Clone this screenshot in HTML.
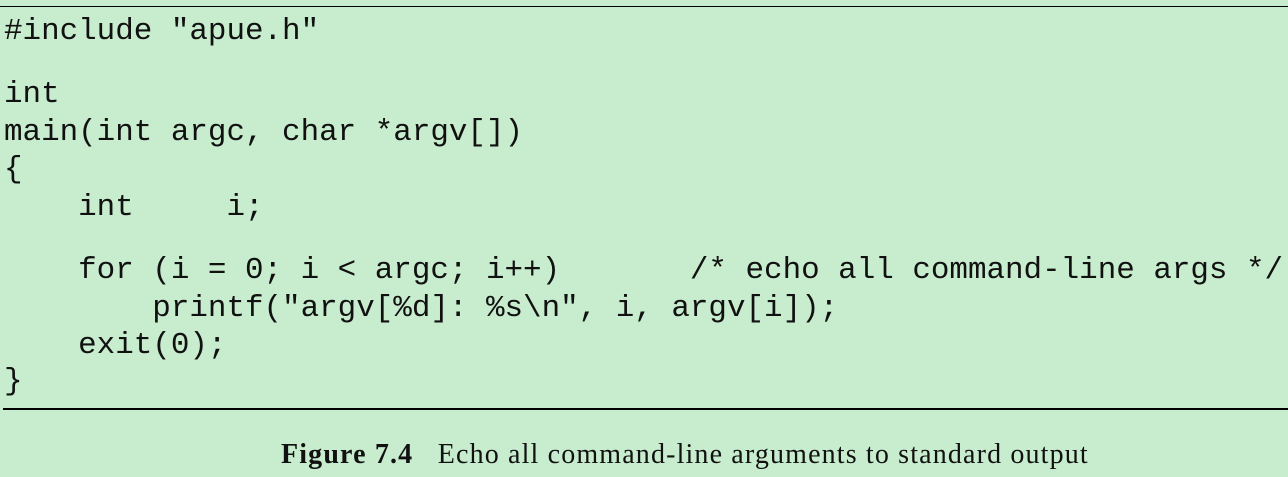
<!DOCTYPE html>
<html><head><style>
body{margin:0;width:1288px;height:477px;background:#c8edce;position:relative;overflow:hidden}
.l{position:absolute;left:4px;font-family:"Liberation Mono",monospace;font-size:30.9px;line-height:1;white-space:pre;color:#111}
.hr1{position:absolute;left:0;top:6px;width:1288px;height:1px;background:#000}
.hr2{position:absolute;left:3px;top:408px;width:1285px;height:2px;background:#000}
.cap{position:absolute;left:281px;top:441px;font-family:"Liberation Serif",serif;font-size:28px;letter-spacing:1.15px;line-height:1;white-space:pre;color:#111}
</style></head><body>
<div class="hr1"></div>
<div class="l" style="top:17px">#include "apue.h"</div>
<div class="l" style="top:80px">int</div>
<div class="l" style="top:118px">main(int argc, char *argv[])</div>
<div class="l" style="top:155px">{</div>
<div class="l" style="top:193px">    int     i;</div>
<div class="l" style="top:256px">    for (i = 0; i &lt; argc; i++)       /* echo all command-line args */</div>
<div class="l" style="top:294px">        printf("argv[%d]: %s\n", i, argv[i]);</div>
<div class="l" style="top:331px">    exit(0);</div>
<div class="l" style="top:367px">}</div>
<div class="hr2"></div>
<div class="cap"><b>Figure 7.4</b>   Echo all command-line arguments to standard output</div>
</body></html>
